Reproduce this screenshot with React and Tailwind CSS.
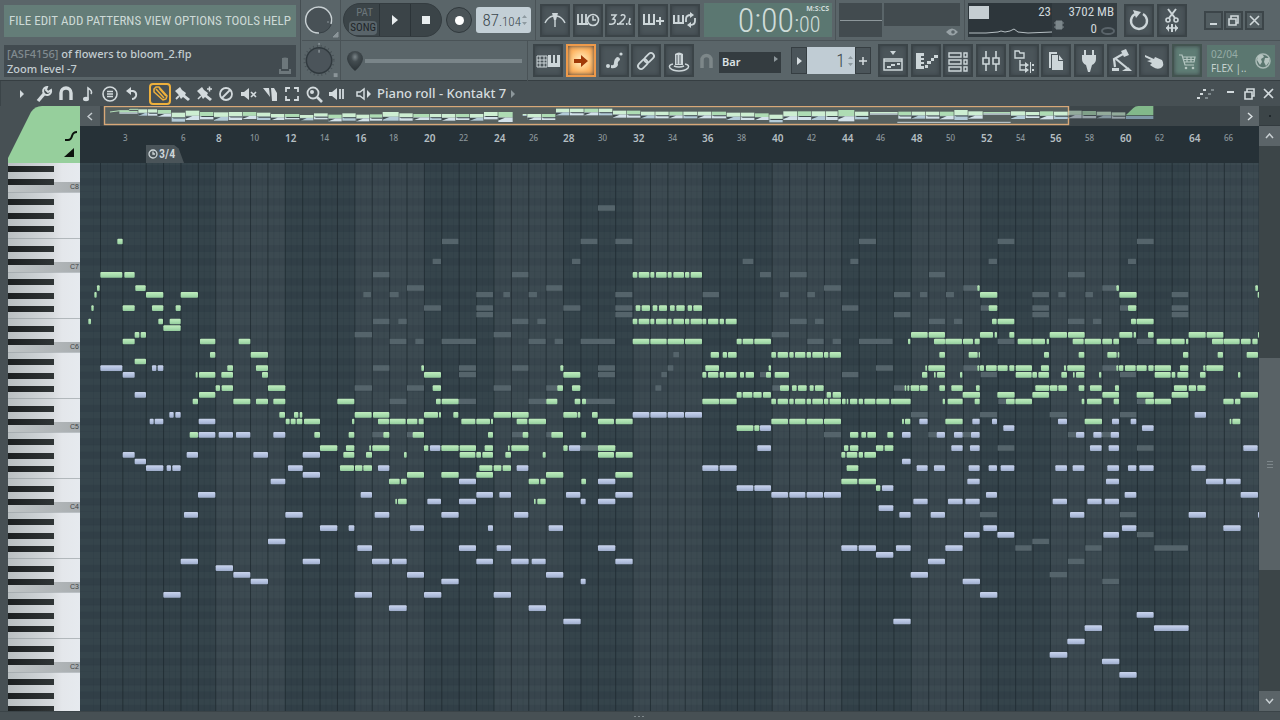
import React from "react";

const NARROW = "font-['Roboto_Condensed','DejaVu_Sans_Condensed',sans-serif]";

/* Timeline geometry: 3 ticks per pixel, 20 ticks per pitch row. */
const FIRST_BAR = 438;
const BAR = 52.17;
const ROLL_LEFT = 240;
const rowTop = (row) => 315 + row * 20 - 9;

/* Each entry: [row, start, end, start, end, ...]; x offset is the section origin. */
const SECTIONS = [
  {
    origin: 0,
    green: [
      [-4, 352, 368], [1, 301, 367, 373, 404], [3, 291, 299, 406, 437], [4, 283, 290, 438, 490, 542, 594],
      [6, 274, 281, 368, 404, 456, 490, 527, 542], [8, 265, 273, 475, 489, 509, 542], [9, 490, 542],
      [10, 404, 418, 422, 438], [11, 368, 404, 600, 646, 716, 751], [13, 630, 646, 752, 804], [14, 404, 438],
      [15, 682, 699, 768, 804], [16, 587, 593, 597, 646, 664, 699, 786, 804], [18, 647, 660, 665, 699, 804, 856],
      [19, 597, 646], [20, 578, 594, 700, 751, 768, 804, 820, 856], [22, 838, 855, 882, 895, 899, 907],
      [23, 857, 869, 872, 887, 890, 907, 912, 960], [25, 569, 594, 943, 960],
    ],
    blue: [
      [15, 301, 367, 456, 469, 473, 490], [16, 368, 404], [19, 404, 438], [22, 508, 521, 526, 542],
      [23, 449, 461, 464, 490, 596, 646], [25, 596, 646, 656, 699, 708, 751, 820, 856],
      [28, 368, 404, 560, 594, 760, 804, 908, 960], [29, 404, 438], [30, 438, 490, 500, 513, 517, 542, 864, 908],
      [31, 908, 960], [32, 812, 856], [34, 594, 646], [37, 552, 594, 856, 908], [41, 804, 856],
      [44, 542, 594, 908, 960], [45, 647, 699], [46, 700, 751], [47, 752, 804], [49, 490, 542],
    ],
    ghost: [],
  },
  {
    origin: 960,
    green: [
      [15, 304, 312, 721, 730], [16, 312, 363, 730, 781], [18, 338, 363, 712, 729, 756, 781],
      [20, 52, 103, 348, 362, 365, 416, 679, 712, 764, 781, 786, 798],
      [22, 104, 155, 159, 208, 312, 354, 357, 363, 400, 415, 521, 573, 576, 626, 730, 771, 773, 781, 816, 833],
      [23, 96, 103, 174, 207, 209, 257, 261, 292, 296, 311, 424, 466, 469, 510, 513, 519, 590, 622, 626, 678, 834, 882, 887, 938],
      [25, 86, 103, 190, 208, 278, 312, 504, 519, 608, 625, 694, 729, 784, 798],
      [27, 0, 52, 78, 103, 148, 153, 157, 208, 312, 325, 364, 416, 419, 468, 494, 519, 564, 569, 574, 626, 730, 743, 834, 886],
      [28, 70, 103, 138, 156, 252, 260, 419, 466, 469, 483, 487, 519, 556, 573, 668, 677, 834, 882, 887, 938],
      [30, 60, 102, 105, 127, 130, 156, 478, 517, 521, 544, 548, 573],
      [31, 261, 312, 364, 416, 469, 519, 678, 730, 886, 938],
      [32, 207, 239, 243, 260, 626, 657, 661, 677, 784, 798], [35, 226, 231, 234, 260, 642, 647, 652, 677],
    ],
    blue: [
      [27, 330, 361, 747, 781], [30, 174, 208, 590, 625], [32, 417, 468, 834, 886],
      [34, 122, 156, 469, 519, 538, 573, 738, 781, 886, 938], [35, 322, 363, 417, 468, 782, 797, 834, 886],
      [37, 164, 208, 364, 416, 582, 625], [39, 0, 52, 86, 103, 270, 312, 504, 519, 686, 729],
      [42, 112, 156, 417, 468, 530, 573, 834, 886],
      [44, 156, 208, 216, 260, 469, 519, 574, 626, 635, 677, 886, 938], [46, 261, 312, 678, 730],
      [47, 364, 416, 782, 797], [49, 104, 156, 312, 364, 521, 573], [51, 207, 260, 626, 678], [53, 730, 782],
    ],
    ghost: [
      [-9, 834, 885], [-4, 366, 415, 782, 832, 886, 937], [-1, 338, 363, 756, 781], [1, 159, 208, 576, 625],
      [3, 261, 312, 679, 727], [4, 130, 153, 209, 236, 469, 519, 550, 570, 626, 651, 886, 937],
      [6, 312, 363, 469, 519, 730, 781, 886, 937], [7, 469, 519, 886, 937], [8, 159, 208, 235, 260, 576, 625, 652, 677],
      [10, 104, 156, 521, 573], [11, 209, 259, 286, 311, 365, 468, 626, 677, 704, 729, 782, 885],
      [15, 159, 208, 417, 468, 576, 625, 834, 885], [16, 417, 468, 834, 885],
      [18, 104, 156, 261, 312, 521, 573, 679, 714], [20, 209, 259, 417, 468, 626, 679, 798, 885],
      [25, 157, 190, 261, 280, 576, 609, 679, 695], [27, 782, 834],
    ],
  },
  {
    origin: 1860,
    green: [
      [1, 38, 52, 56, 88, 91, 103, 108, 140, 143, 155, 160, 192, 195, 208, 212, 246],
      [6, 47, 61, 65, 90, 98, 112, 117, 141, 150, 164, 169, 194, 203, 216, 220, 246],
      [8, 38, 52, 56, 88, 91, 103, 108, 140, 143, 155, 160, 192, 195, 208, 212, 246, 247, 259, 264, 295, 299, 312, 317, 350],
      [10, 873, 923, 926, 975], [11, 38, 88, 91, 140, 143, 192, 195, 246, 350, 365, 368, 400, 403, 453, 864, 871, 942, 975],
      [13, 272, 297, 308, 321, 324, 350, 454, 468, 473, 504, 508, 521, 525, 556, 560, 573, 577, 609, 612, 625, 629, 663, 958, 975],
      [15, 256, 297, 446, 453, 916, 921, 925, 975],
      [16, 247, 259, 264, 295, 299, 312, 317, 350, 360, 372, 377, 402, 438, 453, 464, 507, 906, 922, 942, 947, 951, 975],
      [18, 480, 507, 516, 530, 534, 560, 569, 581, 585, 611, 854, 859, 862, 868, 872, 898, 900, 923, 958, 975],
      [19, 350, 365, 368, 397, 400, 425, 429, 453, 620, 633, 638, 663],
      [20, 247, 297, 299, 350, 454, 468, 473, 504, 508, 521, 525, 556, 560, 573, 577, 609, 612, 625, 629, 663, 666, 677, 680, 685, 690, 712, 716, 729, 733, 766, 769, 808, 813, 872, 968, 975],
      [23, 454, 504, 508, 556, 560, 609, 612, 663, 846, 852, 855, 871], [24, 350, 400, 403, 418],
      [25, 690, 715, 724, 738, 742, 768, 802, 820], [27, 672, 685, 690, 715, 768, 790, 794, 820],
      [28, 664, 676, 680, 712, 716, 729, 733, 768], [30, 680, 715], [32, 664, 712, 716, 768], [33, 768, 781],
    ],
    blue: [
      [22, 38, 88, 91, 140, 143, 192, 195, 246], [23, 898, 923], [24, 420, 453], [25, 846, 872, 950, 975],
      [27, 412, 453], [29, 846, 872], [30, 247, 295, 299, 350, 890, 923, 942, 975],
      [33, 350, 400, 403, 453, 786, 820], [34, 454, 504, 508, 556, 560, 609, 612, 663], [35, 880, 923],
      [36, 776, 820], [37, 838, 872, 932, 975], [42, 664, 712, 716, 768, 828, 872], [43, 768, 820],
      [44, 924, 975], [46, 872, 924], [53, 820, 872],
    ],
    ghost: [
      [-4, 717, 768], [-1, 368, 400, 691, 715], [1, 420, 453, 510, 560, 927, 975], [3, 612, 663],
      [4, 248, 297, 480, 506, 562, 585, 822, 871, 900, 922], [6, 666, 715], [7, 822, 871],
      [8, 510, 560, 585, 611, 927, 975], [10, 455, 507], [11, 562, 611, 638, 663, 717, 818], [13, 160, 177],
      [15, 143, 160, 768, 819], [16, 124, 141, 420, 438, 666, 715], [18, 106, 124, 457, 480, 822, 854],
      [22, 873, 923], [25, 612, 663, 925, 950],
    ],
  },
  {
    origin: 2820,
    green: [
      [3, 112, 119, 529, 537, 946, 954], [4, 120, 172, 538, 590, 953, 959], [6, 146, 172, 564, 589],
      [8, 156, 170, 173, 223, 573, 588, 590, 641],
      [10, 120, 159, 164, 171, 208, 223, 329, 381, 384, 434, 538, 577, 581, 588, 624, 641, 746, 797, 800, 850, 954, 959],
      [11, 16, 66, 69, 99, 104, 119, 233, 275, 277, 315, 320, 327, 398, 431, 434, 483, 487, 516, 520, 537, 650, 691, 694, 734, 738, 745, 816, 850, 851, 899, 903, 932, 937, 953],
      [13, 86, 113, 116, 120, 312, 327, 416, 433, 502, 530, 533, 538, 729, 745, 833, 849, 920, 954],
      [15, 112, 118, 120, 132, 138, 170, 173, 203, 208, 223, 227, 276, 303, 327, 372, 378, 382, 434, 529, 535, 537, 550, 555, 587, 590, 620, 625, 641, 644, 693, 720, 745, 790, 796, 799, 850],
      [16, 60, 67, 227, 275, 277, 291, 295, 327, 364, 381, 399, 404, 408, 433, 477, 484, 644, 692, 695, 706, 712, 745, 780, 797, 894, 901],
      [18, 34, 68, 108, 119, 286, 328, 330, 352, 355, 381, 416, 433, 450, 485, 525, 537, 702, 741, 746, 768, 772, 797],
      [19, 68, 120, 172, 224, 277, 327, 487, 537, 590, 641, 695, 745, 902, 954],
      [20, 23, 68, 104, 119, 198, 224, 226, 276, 425, 433, 441, 485, 521, 537, 616, 642, 644, 693, 850, 881, 885, 901],
      [23, 16, 68, 434, 486, 869, 874, 877, 901],
    ],
    blue: [
      [22, 764, 798], [23, 97, 119, 156, 171, 354, 381, 516, 537, 572, 589], [24, 190, 223, 606, 641],
      [25, 42, 68, 93, 119, 408, 433, 460, 485, 512, 537], [27, 34, 68, 90, 119, 450, 485, 506, 537, 910, 953],
      [30, 86, 119, 146, 171, 182, 223, 346, 381, 398, 433, 502, 537, 564, 589, 598, 641, 754, 797],
      [32, 82, 119, 498, 537, 798, 850, 858, 902], [34, 138, 171, 554, 589, 902, 954],
      [35, 24, 68, 76, 119, 338, 381, 442, 485, 494, 537], [37, 390, 433, 746, 798, 954, 959],
      [39, 130, 171, 546, 589, 850, 902], [40, 72, 119, 172, 223, 490, 537], [42, 16, 68], [47, 68, 120],
      [49, 120, 172], [52, 590, 641], [54, 434, 486, 642, 746], [56, 382, 434], [58, 329, 382], [59, 486, 538],
      [61, 538, 590],
    ],
    ghost: [
      [-4, 173, 223, 591, 641], [-1, 146, 171, 564, 588], [1, 384, 434], [3, 70, 113, 487, 529],
      [4, 18, 42, 277, 327, 355, 377, 436, 459, 695, 745], [6, 122, 146, 277, 327, 540, 564, 695, 745],
      [7, 277, 327, 695, 745], [8, 42, 67, 384, 433, 459, 484], [11, 173, 223, 591, 641],
      [15, 70, 112, 487, 530], [16, 122, 171, 540, 588], [20, 175, 198, 591, 616],
      [22, 120, 171, 329, 381, 540, 589], [25, 68, 93, 384, 408, 486, 512], [27, 173, 223, 591, 641],
      [37, 120, 171, 540, 589], [40, 591, 641], [41, 277, 327], [42, 226, 275, 436, 485, 643, 744],
      [44, 384, 433], [46, 329, 381], [47, 487, 537],
    ],
  },
];

/* Overview blocks in ticks: [start, top, end, bottom]. */
const OVERVIEW = [
  [358, 333, 415, 341], [415, 328, 443, 347], [443, 328, 473, 347], [473, 330, 515, 350], [515, 338, 557, 365],
  [557, 332, 600, 360], [600, 336, 642, 358], [642, 337, 686, 362], [686, 336, 728, 360], [728, 336, 771, 357],
  [771, 338, 813, 360], [813, 342, 855, 360], [855, 342, 900, 358], [900, 345, 942, 361], [942, 340, 985, 358],
  [985, 344, 1027, 364], [1027, 340, 1069, 362], [1069, 344, 1110, 364], [1110, 343, 1148, 362], [1148, 336, 1198, 362],
  [1198, 340, 1240, 362], [1240, 342, 1290, 360], [1290, 342, 1326, 360], [1326, 342, 1368, 362], [1368, 342, 1410, 360],
  [1410, 342, 1452, 362], [1452, 336, 1495, 358], [1495, 336, 1540, 366], [1568, 342, 1582, 348], [1582, 342, 1625, 360],
  [1625, 342, 1668, 360], [1668, 326, 1710, 346], [1710, 326, 1753, 346], [1753, 326, 1796, 346], [1796, 326, 1839, 346],
  [1839, 332, 1881, 353], [1881, 332, 1923, 353], [1923, 335, 1966, 355], [1966, 335, 2008, 355], [2008, 335, 2050, 355],
  [2050, 335, 2093, 355], [2093, 335, 2136, 355], [2136, 335, 2180, 355], [2180, 338, 2222, 360], [2222, 338, 2265, 360],
  [2265, 340, 2308, 360], [2308, 344, 2350, 367], [2350, 334, 2393, 360], [2393, 334, 2435, 360], [2435, 334, 2478, 360],
  [2478, 334, 2515, 360], [2515, 330, 2565, 364], [2565, 335, 2607, 358], [2610, 336, 2695, 344], [2695, 335, 2735, 356],
  [2735, 335, 2778, 356], [2778, 335, 2820, 356], [2820, 335, 2863, 358], [2863, 330, 2905, 360], [2905, 334, 2950, 356],
  [2950, 336, 3033, 344], [3033, 334, 3077, 357], [3077, 336, 3120, 354], [3120, 334, 3162, 358], [3162, 335, 3205, 357],
  [3205, 332, 3247, 355], [3247, 333, 3290, 355], [3290, 335, 3335, 355], [3335, 337, 3378, 356],
];

function Notes({ rows, fill, ghost }) {
  return rows.flatMap(([row, ...xs]) => {
    const out = [];
    for (let i = 0; i < xs.length; i += 2) {
      out.push(
        <rect key={`${row}-${xs[i]}`} x={xs[i]} y={rowTop(row) + 1} width={xs[i + 1] - xs[i]} height={ghost ? 16 : 17} rx={ghost ? 1 : 3} fill={fill} />
      );
    }
    return out;
  });
}

function RollGrid() {
  const blackRows = [1, 3, 6, 8, 10];
  const bars = Array.from({ length: 140 }, (_, i) => i);
  const rows = Array.from({ length: 84 }, (_, i) => i - 16);
  return (
    <svg className="block h-[548px] w-full bg-[#35444b]" role="img" aria-label="Piano roll notes">
      <defs>
        <linearGradient id="gn" x1="0" y1="0" x2="0" y2="1">
          <stop offset="0" stopColor="#c0ecbd" /><stop offset="0.5" stopColor="#aadfaf" /><stop offset="1" stopColor="#94cb9d" />
        </linearGradient>
        <linearGradient id="bn" x1="0" y1="0" x2="0" y2="1">
          <stop offset="0" stopColor="#cad4ec" /><stop offset="0.5" stopColor="#b4c2e0" /><stop offset="1" stopColor="#9fadcb" />
        </linearGradient>
      </defs>
      <g transform="scale(0.33333)">
        {rows.map((r) => {
          const pitch = (((-r) % 12) + 12) % 12;
          return blackRows.includes(pitch) ? (
            <rect key={r} x="0" y={rowTop(r)} width="9000" height="20" fill="#313f47" />
          ) : (
            <rect key={r} x="0" y={rowTop(r)} width="9000" height="1" fill="#313f47" />
          );
        })}
        <g transform={`translate(${-ROLL_LEFT} 0)`}>
          {bars.filter((i) => i % 8 === 4).map((i) => (
            <rect key={i} x={FIRST_BAR + BAR * i} y="0" width={BAR * 4} height="1644" fill="#fff" opacity="0.035" />
          ))}
          {bars.map((i) => (
            <g key={i} fill="#1c282e">
              <rect x={FIRST_BAR + BAR * i - 1} y="0" width="3" height="1644" opacity="0.7" />
              <rect x={FIRST_BAR + BAR * (i + 1 / 3)} y="0" width="2" height="1644" opacity="0.12" />
              <rect x={FIRST_BAR + BAR * (i + 2 / 3)} y="0" width="2" height="1644" opacity="0.12" />
            </g>
          ))}
          <g fill="#1c282e">
            <rect x="300" y="0" width="3" height="1644" opacity="0.7" />
            <rect x="367" y="0" width="3" height="1644" opacity="0.7" />
            <rect x="279" y="0" width="2" height="1644" opacity="0.12" />
            <rect x="322" y="0" width="2" height="1644" opacity="0.12" />
            <rect x="345" y="0" width="2" height="1644" opacity="0.12" />
            <rect x="385" y="0" width="2" height="1644" opacity="0.12" />
            <rect x="403" y="0" width="2" height="1644" opacity="0.12" />
            <rect x="420" y="0" width="2" height="1644" opacity="0.12" />
          </g>
          {SECTIONS.map((s) => (
            <g key={s.origin} transform={`translate(${s.origin} 0)`}>
              <Notes rows={s.ghost} fill="#55646b" ghost />
              <Notes rows={s.green} fill="url(#gn)" />
              <Notes rows={s.blue} fill="url(#bn)" />
            </g>
          ))}
        </g>
      </g>
    </svg>
  );
}

function Keyboard() {
  const octaves = [8, 7, 6, 5, 4, 3, 2, 1];
  return (
    <svg className="block h-[548px] w-[72px]" role="img" aria-label="Keyboard">
      <defs>
        <linearGradient id="kw" x1="0" y1="0" x2="1" y2="0">
          <stop offset="0" stopColor="#b9bfc1" /><stop offset="0.6" stopColor="#d6dadd" /><stop offset="0.75" stopColor="#e4e7eb" /><stop offset="1" stopColor="#e6eaef" />
        </linearGradient>
        <linearGradient id="kc" x1="0" y1="0" x2="1" y2="0">
          <stop offset="0" stopColor="#c0c5c6" /><stop offset="1" stopColor="#a8adb0" />
        </linearGradient>
        <linearGradient id="kb" x1="0" y1="0" x2="1" y2="0">
          <stop offset="0" stopColor="#1c2021" /><stop offset="1" stopColor="#303536" />
        </linearGradient>
      </defs>
      <rect width="72" height="548" fill="url(#kw)" />
      {octaves.map((o, i) => {
        const c = 25 + i * 80;
        return (
          <g key={o}>
            <rect x="0" y={c - 6} width="72" height="10" fill="url(#kc)" />
            <rect x="0" y={c + 4} width="72" height="1" fill="#8f979b" opacity="0.5" />
            <rect x="0" y={c - 30} width="72" height="1" fill="#8f979b" opacity="0.6" />
            {[1, 3, 6, 8, 10].map((k) => (
              <rect key={k} x="0" y={Math.round(c - 2 - k * 6.667)} width="46" height="6" fill="url(#kb)" />
            ))}
            {o > 1 && <text x="62" y={c + 1} fontSize="7" fontFamily="Liberation Sans, sans-serif" fill="#3c4244">C{o}</text>}
          </g>
        );
      })}
    </svg>
  );
}

function ToolButton({ label, children, tone }) {
  const tones = {
    dark: "border-[#3b4448] bg-[#4b555a] text-[#cdd6d9]",
    hot: "border-[#ee9a4a] bg-[radial-gradient(circle,#ffe9b8_10%,#ffb765_60%,#f59a48_100%)] text-[#a13a08]",
    green: "border-[#435450] bg-[#5f7d75] text-[#b4c5c0]",
  };
  return (
    <button aria-label={label} className={`flex h-[33px] w-[30px] shrink-0 items-center justify-center border-2 shadow-[inset_0_0_4px_#3a4347] ${tones[tone || "dark"]}`}>
      <svg width="26" height="26" viewBox="0 0 26 26" fill="none" stroke="currentColor" strokeWidth="2">{children}</svg>
    </button>
  );
}

const F = { fill: "currentColor", stroke: "none" };

function TopButtons() {
  return (
    <div className="flex w-[160px] shrink-0 justify-between">
      <ToolButton label="Metronome"><path d="M3 16Q6 10 11 9M23 16Q20 10 15 9M13 8V20" strokeWidth="1.4" /><path d="M10 6H16L14 13H12Z" {...F} /></ToolButton>
      <ToolButton label="Wait for input"><path d="M3 7V17H13M7 7V16M11 7V16" strokeWidth="1.8" /><circle cx="18" cy="13" r="5.5" fill="#4b555a" strokeWidth="1.6" /><path d="M18 9V13H21" strokeWidth="1.5" /></ToolButton>
      <ToolButton label="Countdown"><path d="M4 8H9L6 12Q9 12 8 15Q7 18 2 17M14 9Q15 7 17 8Q19 9 17 12L12 17H17M23 11L22 16Q22 18 24 17" strokeWidth="1.5" /><path d="M10 16h1.500v2h-1.500zM19 16h1.500v2h-1.500z" {...F} /></ToolButton>
      <ToolButton label="Step edit"><path d="M4 7V17H14V7M9 7V17" /><path d="M16 14H24M20 10V18" /></ToolButton>
      <ToolButton label="Loop recording"><path d="M2 8V16H11V8M6.500 8V16" /><path d="M14 15V12Q14 8 19 8M23 11V14Q23 18 18 18" strokeWidth="1.8" /><path d="M18 5L22 8L18 11ZM19 15L15 18L19 21Z" {...F} /></ToolButton>
    </div>
  );
}

function EditButtons() {
  return (
    <div className="flex w-[161px] shrink-0 justify-between">
      <ToolButton label="Typing keyboard"><path d="M2 8H12V19H2ZM2 12H12M2 15H12M5 8V19M9 8V19" strokeWidth="1" /><path d="M13 7H16V15H18V7H20V15H22V7H25V19H13Z" {...F} /></ToolButton>
      <ToolButton label="Scroll" tone="hot"><path d="M6 11H13V7L20 13L13 19V15H6Z" {...F} /></ToolButton>
      <ToolButton label="Slide"><path d="M10 17Q13 18 13 15Q13 11 16 9Q19 9 19 12Q16 14 17 17Q15 21 10 20Z" {...F} /><circle cx="7" cy="18" r="2" {...F} /><circle cx="20" cy="6" r="1.600" {...F} /></ToolButton>
      <ToolButton label="Link"><g transform="rotate(-45 13 13)"><rect x="3" y="10" width="11" height="6" rx="3" strokeWidth="1.800" /><rect x="12" y="10" width="11" height="6" rx="3" strokeWidth="1.800" /></g></ToolButton>
      <ToolButton label="Render"><path d="M9 17V6Q13 3 17 6V17Z" {...F} /><path d="M7 16Q2 17 4 20Q7 23 13 23T22 20Q24 17 19 16" strokeWidth="1.5" /><path d="M8 18Q13 20 18 18" strokeWidth="1.5" /><path d="M11 7V16M14 7V16" stroke="#4b555a" strokeWidth="1" /></ToolButton>
    </div>
  );
}

function WindowButtons() {
  return (
    <div className="flex w-[324px] shrink-0 justify-between">
      <ToolButton label="Playlist"><path d="M4 11H22V22H4ZM4 13H22" strokeWidth="1.5" /><path d="M10 3H16L13 7ZM7 18H11V20H7ZM11 16H15V18H11ZM17 15H20V17H17Z" {...F} /></ToolButton>
      <ToolButton label="Piano roll"><path d="M3 5H11V8H8V10H11V12H8V14H11V16H8V18H11V21H3ZM12 17H15V20H12ZM14 13H18V16H14ZM18 10H21V13H18ZM21 7H25V10H21Z" {...F} /></ToolButton>
      <ToolButton label="Channel rack"><path d="M4 5H16V9H4ZM4 12H16V16H4ZM4 19H16V23H4ZM19 5H22V9H19ZM19 12H22V16H19ZM19 19H22V23H19Z" strokeWidth="1.4" /></ToolButton>
      <ToolButton label="Mixer"><path d="M8 3V10M8 16V23M18 3V10M18 16V23M5 10H11V16H5ZM15 10H21V16H15Z" strokeWidth="1.6" /></ToolButton>
      <ToolButton label="Browser"><path d="M4 3H8L9 5H13V10H4ZM9 12V22H15M9 17H15" strokeWidth="1.4" /><path d="M14 14L18 17L14 20ZM19 14H20V20H19ZM14 19L18 22L14 25ZM19 19H20V25H19ZM21 16H23V18H21ZM21 21H23V23H21Z" {...F} /></ToolButton>
      <ToolButton label="Files"><path d="M6 4H14V6H8V20H6Z" {...F} /><path d="M9 7H15V13H20V22H9ZM16 7L20 12H16Z" {...F} /></ToolButton>
      <ToolButton label="Plugin picker"><path d="M8 2H10V7H16V2H18V7H20V11Q20 15 16 17L14 24H12L10 17Q6 15 6 11V7H8Z" {...F} /></ToolButton>
      <ToolButton label="Tempo tapper"><path d="M6 19L5 11L14 6M7 11L18 20" strokeWidth="2.200" /><path d="M12 3L17 1L20 7L15 9ZM3 20H10V23H3ZM13 23L19 19L23 23Z" {...F} /></ToolButton>
      <ToolButton label="Touch controllers"><path d="M4 7L13 11L14 9L21 12Q24 17 20 20Q16 22 12 19L9 17L11 15L6 13L10 12L4 9Z" {...F} /></ToolButton>
      <ToolButton label="Shop" tone="green"><path d="M5 7H8L11 17H20M9 9H21L20 14H10M13 9V14M17 9V14M9 11.500H20" strokeWidth="1.2" /><circle cx="12" cy="20" r="1.300" {...F} /><circle cx="19" cy="20" r="1.300" {...F} /></ToolButton>
    </div>
  );
}

function WinButton({ label, children }) {
  return (
    <button aria-label={label} className="flex h-[19px] w-[19px] items-center justify-center border-2 border-[#3c4549] bg-[#525d61] text-[#cfd7da]">
      <svg width="13" height="13" viewBox="0 0 13 13" fill="none" stroke="currentColor" strokeWidth="1.6">{children}</svg>
    </button>
  );
}

function Header() {
  return (
    <header className="flex h-[81px] border-b border-[#363e42] bg-[#5a6569]">
      <div className="w-[301px] shrink-0 border-r border-[#454e52] px-1 pt-[5px]">
        <nav className="flex h-8 items-center justify-between bg-[#647d78] px-[5px] font-['Roboto_Condensed','DejaVu_Sans_Condensed',sans-serif] text-[13px] text-[#ccd9d6]">
          {["FILE", "EDIT", "ADD", "PATTERNS", "VIEW", "OPTIONS", "TOOLS", "HELP"].map((m) => (
            <button key={m}>{m}</button>
          ))}
        </nav>
        <div className="mt-2 flex h-8 justify-between bg-[#424b50] pr-1 pl-[3px] font-['Noto_Sans',sans-serif] text-[11px] leading-[15px] font-medium text-[#c3cdd1]">
          <div className="pt-px">
            <p><span className="text-[#808a8f]">[ASF4156]</span> of flowers to bloom_2.flp</p>
            <p>Zoom level -7</p>
          </div>
          <svg className="mt-3" width="14" height="18" viewBox="0 0 14 18" fill="#6d777b"><path d="M4 1Q7 0 10 1V12H4ZM1 12H3V14H11V12H13V17H1Z" /></svg>
        </div>
      </div>
      <div className="flex w-10 shrink-0 flex-col items-center border-r border-[#4a5357]">
        <svg width="38" height="40" viewBox="0 0 38 40">
          <circle cx="17" cy="20" r="13" fill="#485156" stroke="#384146" />
          <path d="M17 33A13 13 0 1 1 29 24" fill="none" stroke="#c8d0d3" strokeWidth="1.5" />
          <path d="M25 22H27M31 37L36 32V37Z" stroke="#8b9599" fill="#8b9599" />
        </svg>
        <svg className="border-t border-[#4a5357]" width="38" height="40" viewBox="0 0 38 40">
          <circle cx="17" cy="20" r="15" fill="none" stroke="#475055" strokeWidth="2" strokeDasharray="1 3" />
          <circle cx="17" cy="20" r="13" fill="#4b545a" stroke="#30393e" strokeWidth="1.500" />
          <path d="M17 9V12M17 2V4" stroke="#aab3b6" /><path d="M32 33h4v4h-4z" fill="#8b9599" />
        </svg>
      </div>
      <div className="flex min-w-0 flex-1 flex-col">
        <div className="flex h-10 items-center">
          <div className="ml-[2px] flex h-[34px] w-[99px] shrink-0 overflow-hidden rounded-full border border-[#343c40] bg-[#3b4448]">
            <div className={`flex w-[35px] flex-col items-end justify-center gap-px pr-[2px] text-[12px] leading-[14px] ${NARROW}`}>
              <button className="pr-1 text-[11px] text-[#6c767a]">PAT</button>
              <button className="rounded-sm bg-[#59646a] px-px text-[11px] text-[#1e2528]">SONG</button>
            </div>
            <button aria-label="Play" className="flex w-8 items-center justify-center border-x border-[#2c3438]"><svg width="10" height="12"><path d="M2 1L8 6L2 11Z" fill="#e8edef" /></svg></button>
            <button aria-label="Stop" className="flex flex-1 items-center justify-center"><svg width="8" height="8"><rect width="8" height="8" fill="#e8edef" /></svg></button>
          </div>
          <button aria-label="Record" className="ml-1 flex h-[26px] w-[26px] shrink-0 items-center justify-center rounded-full border border-[#30383c] bg-[#4a5357]"><span className="h-[9px] w-[9px] rounded-full bg-white" /></button>
          <div className={`ml-1 flex h-[26px] w-[55px] shrink-0 items-baseline justify-end rounded-[3px] bg-[#c3cfd6] pr-[4px] text-[17px] leading-[26px] font-light text-[#3c474d] ${NARROW}`}>
            87<span className="text-[13px]">.104</span>
            <svg className="ml-px self-center" width="5" height="12"><path d="M0 4L2.500 1L5 4ZM0 8L2.500 11L5 8Z" fill="#8e9aa0" /></svg>
          </div>
          <div className="mx-1 h-10 w-px shrink-0 bg-[#4a5357]" />
          <TopButtons />
          <div className={`ml-1 flex h-[34px] w-[128px] shrink-0 items-baseline justify-end bg-[#5b7771] pr-[3px] font-light text-[#cfdcd9] ${NARROW}`}>
            <span className="text-[34px] leading-[34px]">0:00</span><span className="text-[24px] leading-[24px]">:</span>
            <span className="flex w-[30px] flex-col self-start">
              <span className="pt-px text-right font-['Noto_Sans',sans-serif] text-[7px] leading-[9px] font-bold">M:S:CS</span>
              <span className="text-[22px] leading-6">00</span>
            </span>
          </div>
          <div className="mx-[3px] h-10 w-px shrink-0 bg-[#4a5357]" />
          <svg className="shrink-0" width="122" height="34" viewBox="0 0 122 34">
            <rect width="43" height="34" fill="#424b4f" /><path d="M1 17.500H43" stroke="#8d979b" />
            <rect x="45" width="76" height="23" fill="#424b4f" />
            <path d="M107 29Q113 22 119 29Q113 36 107 29Z" fill="#98a2a6" /><circle cx="114" cy="29" r="1.800" fill="#5a6569" />
          </svg>
          <div className="mx-[3px] h-10 w-px shrink-0 bg-[#4a5357]" />
          <div className={`relative flex h-[34px] w-[149px] shrink-0 bg-[#2d363b] pt-px text-[13px] leading-4 text-[#d0d8db] ${NARROW}`}>
            <svg className="absolute top-0 left-0" width="149" height="34">
              <rect x="84" width="65" height="34" fill="#343d42" />
              <rect x="1" y="3" width="20" height="13" fill="#c5ced2" />
              <path d="M1 30H18L30 29L33 28L37 29L42 28L46 26L50 29L60 30L84 29" fill="none" stroke="#b6bfc3" />
              <path d="M88 18h6v8h-6zM86 20h10M86 24h10" fill="#7d878b" stroke="#7d878b" />
              <ellipse cx="140" cy="28" rx="6" ry="3" fill="none" stroke="#5a646a" strokeWidth="2" />
            </svg>
            <span className="relative w-[83px] text-right">23</span>
            <div className="relative flex-1 pr-[3px] text-right"><p>3702 MB</p><p className="pt-px pr-[17px]">0</p></div>
          </div>
          <div className="ml-[7px] flex w-[63px] shrink-0 justify-between">
            <ToolButton label="Undo"><path d="M9 7A8 8 0 1 0 17 7" strokeWidth="2.400" /><path d="M7 3L15 5L10 11Z" {...F} /></ToolButton>
            <ToolButton label="Edit"><path d="M9 2L16 11M17 2L10 11" /><circle cx="9" cy="13" r="2" strokeWidth="1.600" /><circle cx="17" cy="13" r="2" strokeWidth="1.600" /><path d="M7 21H19" strokeWidth="1.600" /><path d="M7 21L10 17V25ZM19 21L16 17V25ZM12 17H14V25H12Z" {...F} /></ToolButton>
          </div>
          <div className="mx-auto flex w-[60px] shrink-0 justify-between">
            <WinButton label="Minimize"><path d="M3 10H10" strokeWidth="2" /></WinButton>
            <WinButton label="Restore"><path d="M2 5H9V11H2ZM4 5V2H11V9H9" /></WinButton>
            <WinButton label="Close"><path d="M2 2L11 11M11 2L2 11" /></WinButton>
          </div>
        </div>
        <div className="flex h-10 items-center border-t border-[#4a5357]">
          <div className="relative ml-1 flex h-8 w-[177px] shrink-0 items-center">
            <div className="ml-5 h-1 flex-1 bg-[#7a8589]" />
            <svg className="absolute left-0" width="20" height="22" viewBox="0 0 20 22">
              <defs><radialGradient id="kn" cx="0.5" cy="0.3" r="0.6"><stop offset="0" stopColor="#7b8589" /><stop offset="0.4" stopColor="#434c50" /><stop offset="1" stopColor="#2f373b" /></radialGradient></defs>
              <path d="M2 9A8 8 0 1 1 18 9Q17 15 10 21Q3 15 2 9Z" fill="url(#kn)" />
            </svg>
            <input type="range" aria-label="Song position" defaultValue="0" className="absolute inset-0 opacity-0" />
          </div>
          <div className="mx-[5px] h-10 w-px shrink-0 bg-[#4a5357]" />
          <EditButtons />
          <svg className="mx-[6px] shrink-0" width="13" height="16" viewBox="0 0 13 16"><path d="M2 15V7A4.500 4.500 0 0 1 11 7V15" fill="none" stroke="#7d8789" strokeWidth="3.500" /></svg>
          <label className="relative shrink-0">
            <select aria-label="Snap" className="h-[21px] w-[62px] appearance-none bg-[#343c40] pl-[3px] font-['Noto_Sans',sans-serif] text-[11px] font-semibold text-[#dce2e4]"><option>Bar</option></select>
            <svg className="absolute top-2 right-[3px]" width="4" height="6"><path d="M0 0L4 3L0 6Z" fill="#8d979b" /></svg>
          </label>
          <div className="ml-[10px] flex h-[27px] shrink-0">
            <button aria-label="Pattern menu" className="flex w-4 items-center justify-center border border-[#363e42] bg-[#4b555a]"><svg width="5" height="8"><path d="M0 0L5 4L0 8Z" fill="#d7dee1" /></svg></button>
            <div className="flex items-center bg-[#c0ccd4]">
              <input aria-label="Pattern number" defaultValue="1" className={`w-[40px] pr-[2px] text-right text-[18px] font-light text-[#3c474d] ${NARROW}`} />
              <svg width="8" height="12"><path d="M1 4L3.500 1L6 4ZM1 8L3.500 11L6 8Z" fill="#8e9aa0" /></svg>
            </div>
            <button aria-label="Add pattern" className="flex w-4 items-center justify-center border border-[#363e42] bg-[#4b555a]"><svg width="8" height="8"><path d="M0 4H8M4 0V8" stroke="#d7dee1" strokeWidth="1.500" /></svg></button>
          </div>
          <div className="ml-[7px] flex"><WindowButtons /></div>
          <div className="mr-[5px] ml-[5px] flex h-8 min-w-[68px] flex-1 items-center justify-between bg-[#5b7770] px-1 font-['Noto_Sans',sans-serif] text-[10px] leading-[14px]">
            <div><p className="text-[#96aca6]">02/04</p><p className="text-[#c5d2cf]">FLEX |..</p></div>
            <svg width="16" height="16" viewBox="0 0 16 16"><circle cx="8" cy="8" r="7" fill="#5b7770" stroke="#a9bab6" strokeWidth="1.500" /><path d="M3 3Q8 0 9 4L6 6L7 9L5 12L2 7ZM10 5L14 5L14 9L11 13L9 9Z" fill="#b5c4c0" /></svg>
          </div>
        </div>
      </div>
    </header>
  );
}

function Icon({ label, children, active }) {
  return (
    <button aria-label={label} className={`flex h-[22px] w-[22px] items-center justify-center rounded-[4px] ${active ? "border-2 border-[#eeb03c] text-[#eeb03c]" : "text-[#d3dadd]"}`}>
      <svg className="shrink-0" width="18" height="18" viewBox="0 0 18 18" fill="none" stroke="currentColor" strokeWidth="1.8">{children}</svg>
    </button>
  );
}

function TitleBar() {
  return (
    <div className="flex h-[25px] items-center justify-between bg-[#475054] pr-[5px] pl-[2px]">
      <div className="flex items-center">
        <Icon label="Menu"><path d="M7 5L11 9L7 13Z" {...F} /></Icon>
        <Icon label="Tools"><path d="M3 16L9 9" strokeWidth="3.400" /><path d="M16 5A4 4 0 1 1 12 2L11 5L13 7Z" strokeWidth="2" /></Icon>
        <Icon label="Snap"><path d="M4 15V8A5 5 0 0 1 14 8V15" strokeWidth="3.400" /></Icon>
        <Icon label="Stamp"><path d="M9 13V3Q14 6 12 9" strokeWidth="1.600" /><ellipse cx="7" cy="14" rx="3" ry="2.200" {...F} /></Icon>
        <Icon label="Quantize"><circle cx="9" cy="9" r="7" strokeWidth="1.600" /><path d="M6 6.500H12M6 9H12M6 11.500H12" strokeWidth="1.300" /></Icon>
        <Icon label="Undo"><path d="M6 6H10Q14 7 13 11Q12 14 9 14" strokeWidth="2" /><path d="M3 6L8 2V10Z" {...F} /></Icon>
        <div className="w-[6px]" />
        <Icon label="Draw" active><path d="M3 4L5 2L8 2L16 11L15 14L12 15L3 7ZM5 4L13 13M8 3L15 11" strokeWidth="1.500" /></Icon>
        <Icon label="Paint"><path d="M2 6L7 2L9 5L13 8L12 10L17 14L15 16L10 12L8 14L5 9Z" {...F} /><path d="M3 14L6 11" /></Icon>
        <Icon label="Paint chords"><path d="M2 6L7 2L9 5L13 8L12 10L17 14L15 16L10 12L8 14L5 9Z" {...F} /><path d="M3 14L6 11M12 4H17M14.500 1.500V6.500" strokeWidth="1.500" /></Icon>
        <Icon label="Delete"><circle cx="9" cy="9" r="6" strokeWidth="1.800" /><path d="M5 13L13 5" /></Icon>
        <Icon label="Mute"><path d="M2 7H5L10 3V15L5 11H2Z" {...F} /><path d="M12 7L17 12M17 7L12 12" strokeWidth="1.600" /></Icon>
        <Icon label="Slice"><path d="M2 3L8 3L9 12ZM10 3H13L16 8V16H11Z" {...F} /></Icon>
        <Icon label="Select"><path d="M3 7V3H7M11 3H15V7M15 11V15H11M7 15H3V11" /></Icon>
        <Icon label="Zoom"><circle cx="8" cy="8" r="5.500" /><circle cx="7" cy="7" r="2" {...F} /><path d="M12 12L17 17" strokeWidth="2.600" /></Icon>
        <Icon label="Playback"><path d="M2 7H5L10 3V15L5 11H2Z" {...F} /><path d="M13 4V14M16 4V14" /></Icon>
        <div className="w-[9px]" />
        <button className="flex items-center gap-[5px] font-['Noto_Sans',sans-serif] text-[13px] font-medium text-[#d5dcdf]">
          <svg width="16" height="14" viewBox="0 0 16 14" fill="none" stroke="currentColor" strokeWidth="1.500"><path d="M1 5H4L8 2V12L4 9H1Z" /><path d="M11 3L15 7L11 11Z" {...F} /></svg>
          Piano roll - Kontakt 7
          <svg width="5" height="8"><path d="M0 0L4 4L0 8Z" fill="#8d979b" /></svg>
        </button>
      </div>
      <div className="flex items-center gap-[6px] text-[#d3dadd]">
        <svg className="mr-[3px]" width="18" height="14" viewBox="0 0 18 14"><path d="M0 10h3v2h-3zM3 6h3v2h-3zM6 2h3v2h-3z" fill="currentColor" /><path d="M8 10h3v2h-3zM11 6h3v2h-3zM14 2h3v2h-3z" fill="#7e888c" /></svg>
        <button aria-label="Minimize roll"><svg width="13" height="13" viewBox="0 0 13 13"><path d="M3 5H10" stroke="currentColor" strokeWidth="2" /></svg></button>
        <button aria-label="Restore roll"><svg width="13" height="13" viewBox="0 0 13 13" fill="none" stroke="currentColor" strokeWidth="1.600"><path d="M2 5H9V12H2ZM4 5V2H11V9H9" /></svg></button>
        <button aria-label="Close roll"><svg width="13" height="13" viewBox="0 0 13 13"><path d="M2 2L11 11M11 2L2 11" stroke="currentColor" strokeWidth="1.600" /></svg></button>
      </div>
    </div>
  );
}

function Overview() {
  return (
    <div className="flex h-5 bg-[#3d464a]">
      <button aria-label="Scroll left" className="flex w-5 items-center justify-center bg-[#525b5f]"><svg width="6" height="9"><path d="M5 1L1 4.500L5 8" fill="none" stroke="#c5ccd0" strokeWidth="1.500" /></svg></button>
      <svg className="block h-5 min-w-0 flex-1" role="img" aria-label="Overview">
        <rect x="4.500" y="0.500" width="964" height="18" fill="#56605f" stroke="#d8a878" strokeWidth="1.400" />
        <g transform="scale(0.33333) translate(-300 -318)">
          <path d="M330 336L360 332H385L390 328H415" fill="none" stroke="#b5dfb9" strokeWidth="3" />
          {OVERVIEW.map(([x, y, x2, y2], i) => {
            const dim = x >= 3205;
            const mid = y + (y2 - y) * 0.55;
            return (
              <g key={x} opacity={dim ? 0.6 : 1}>
                <rect x={x} y={y} width={x2 - x - 2} height={mid - y} fill={i % 3 ? "#cdeed2" : "#aedcb4"} />
                <rect x={x} y={mid} width={x2 - x - 2} height={y2 - mid} fill={i % 3 === 1 ? "#b3cbd8" : "#d3e2ea"} />
                {y2 - y > 12 && <path d={i % 2 ? `M${x} ${mid + 1}H${x + 20}L${x} ${mid + 9}Z` : `M${x} ${mid}H${x2}V${mid + 3}H${x + 6}Z`} fill="#414c4f" />}
              </g>
            );
          })}
          <path d="M2692 367H3032" stroke="#c8d6dc" strokeWidth="3" />
          <path d="M3378 345L3400 324Q3406 318 3415 318H3460V346H3378Z" fill="#82b88a" />
          <rect x="3378" y="348" width="82" height="9" fill="#7d96a5" />
        </g>
      </svg>
      <button aria-label="Scroll right" className="flex w-[19px] items-center justify-center bg-[#5b6468]"><svg width="6" height="9"><path d="M1 1L5 4.500L1 8" fill="none" stroke="#dde3e5" strokeWidth="1.500" /></svg></button>
    </div>
  );
}

function Ruler() {
  const bars = [3, ...Array.from({ length: 31 }, (_, i) => 6 + i * 2)];
  return (
    <div className="relative h-[37px] overflow-hidden bg-[#263137] font-['Noto_Sans',sans-serif]">
      {bars.map((n) => {
        const left = n === 3 ? 43 : Math.round((FIRST_BAR - ROLL_LEFT + BAR * (n - 4)) / 3);
        return (
          <span key={n} style={{ left }} className={`absolute top-1 leading-4 ${n % 4 === 0 ? "text-[10px] font-semibold text-[#b5bfc3]" : "text-[8px] font-medium text-[#8b969b]"}`}>{n}</span>
        );
      })}
      <div className={`absolute top-[19px] left-[66px] flex h-[18px] w-[38px] items-center gap-px bg-[#4a5459] pl-[2px] text-[12px] font-semibold text-[#ced6d9] [clip-path:polygon(0_0,74%_0,86%_20%,100%_100%,0_100%)] ${NARROW}`}>
        <svg width="10" height="10" viewBox="0 0 10 10" fill="none" stroke="currentColor" strokeWidth="1.300"><circle cx="5" cy="5" r="4" /><path d="M5 2.500V5H7" /></svg>
        <span>3/4</span>
      </div>
    </div>
  );
}

export default function App() {
  return (
    <div className="flex min-h-screen min-w-[1280px] flex-col bg-[#475054]">
      <Header />
      <main className="flex flex-1 flex-col">
        <div className="border-l border-[#3b4448] pl-2"><TitleBar /></div>
        <div className="flex">
          <div className="ml-2 w-[72px] shrink-0">
            <svg className="block" width="72" height="57" viewBox="0 0 72 57">
              <path d="M0 57V52L23 6Q27 0 34 0H72V57Z" fill="#96cf9c" />
              <path d="M57 34H60Q63 34 64 30Q65 26 69 26" fill="none" stroke="#0c130d" strokeWidth="2" /><path d="M66 42V51H56Z" fill="#0c130d" />
            </svg>
            <Keyboard />
          </div>
          <div className="min-w-0 flex-1">
            <Overview />
            <Ruler />
            <RollGrid />
          </div>
          <div className="flex w-[21px] shrink-0 flex-col bg-[#3c4548]">
            <div className="flex h-5 items-center justify-center border-b border-[#333b3f]"><span className="h-[2px] w-[2px] bg-[#20282c]" /></div>
            <button aria-label="Scroll up" className="flex h-5 items-center justify-center bg-[#5b6468]"><svg width="9" height="6"><path d="M1 5L4.500 1L8 5" fill="none" stroke="#c8cfd2" strokeWidth="1.500" /></svg></button>
            <div className="flex flex-1 flex-col pt-[212px]">
              <div className="flex h-[212px] flex-col items-center justify-center gap-[2px] bg-[#596266]">
                <span className="h-px w-[6px] bg-[#7d868a]" /><span className="h-px w-[6px] bg-[#7d868a]" /><span className="h-px w-[6px] bg-[#7d868a]" />
              </div>
            </div>
            <button aria-label="Scroll down" className="flex h-5 items-center justify-center bg-[#5b6468]"><svg width="9" height="6"><path d="M1 1L4.500 5L8 1" fill="none" stroke="#c8cfd2" strokeWidth="1.500" /></svg></button>
          </div>
        </div>
        <div className="flex flex-1 items-center justify-center border-t border-[#3b4448] text-[#80898d]"><svg width="14" height="3"><path d="M1 1.500H13" stroke="currentColor" strokeDasharray="2 2" /></svg></div>
      </main>
    </div>
  );
}
